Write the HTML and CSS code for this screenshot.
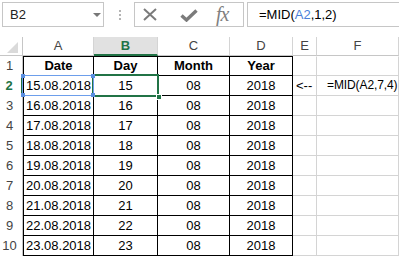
FILE: index.html
```html
<!doctype html>
<html lang="en">

<head>
  <meta charset="utf-8">
  <title>MID formula - sheet</title>
  <link rel="stylesheet" href="styles.css">
</head>

<body>
  <div class="fbar">
    <div class="namebox">B2<span class="caret"></span></div>
    <div class="grip"><i></i><i></i><i></i></div>
    <div class="btns">
      <svg class="cancel" width="14" height="13" viewBox="0 0 14 13">
        <path d="M1 1L13 12M13 1L1 12" stroke="#7b7b7b" stroke-width="2" fill="none" />
      </svg>
      <svg class="enter" width="18" height="13" viewBox="0 0 18 13">
        <path d="M1.5 6.5L6.5 11L16.5 1.5" stroke="#7b7b7b" stroke-width="3.4" fill="none" />
      </svg>
      <span class="fx">fx</span>
    </div>
    <div class="formula">=MID(<span class="ref">A2</span>,1,2)</div>
  </div>

  <div class="sheet">
    <div class="corner"><span class="tri"></span></div>
    <div class="ch">A</div>
    <div class="ch sel">B</div>
    <div class="ch">C</div>
    <div class="ch">D</div>
    <div class="ch">E</div>
    <div class="ch">F</div>

    <div class="rh">1</div>
    <div class="c t a top b mid">Date</div>
    <div class="c t top b mid">Day</div>
    <div class="c t top b mid">Month</div>
    <div class="c t top b mid">Year</div>
    <div class="c g top"></div>
    <div class="c g top"></div>

    <div class="rh sel">2</div>
    <div class="c t a">15.08.2018</div>
    <div class="c t mid">15</div>
    <div class="c t mid">08</div>
    <div class="c t mid">2018</div>
    <div class="c g">&lt;--</div>
    <div class="c g note">=MID(A2,7,4)</div>

    <div class="rh">3</div>
    <div class="c t a">16.08.2018</div>
    <div class="c t mid">16</div>
    <div class="c t mid">08</div>
    <div class="c t mid">2018</div>
    <div class="c g"></div>
    <div class="c g"></div>

    <div class="rh">4</div>
    <div class="c t a">17.08.2018</div>
    <div class="c t mid">17</div>
    <div class="c t mid">08</div>
    <div class="c t mid">2018</div>
    <div class="c g"></div>
    <div class="c g"></div>

    <div class="rh">5</div>
    <div class="c t a">18.08.2018</div>
    <div class="c t mid">18</div>
    <div class="c t mid">08</div>
    <div class="c t mid">2018</div>
    <div class="c g"></div>
    <div class="c g"></div>

    <div class="rh">6</div>
    <div class="c t a">19.08.2018</div>
    <div class="c t mid">19</div>
    <div class="c t mid">08</div>
    <div class="c t mid">2018</div>
    <div class="c g"></div>
    <div class="c g"></div>

    <div class="rh">7</div>
    <div class="c t a">20.08.2018</div>
    <div class="c t mid">20</div>
    <div class="c t mid">08</div>
    <div class="c t mid">2018</div>
    <div class="c g"></div>
    <div class="c g"></div>

    <div class="rh">8</div>
    <div class="c t a">21.08.2018</div>
    <div class="c t mid">21</div>
    <div class="c t mid">08</div>
    <div class="c t mid">2018</div>
    <div class="c g"></div>
    <div class="c g"></div>

    <div class="rh">9</div>
    <div class="c t a">22.08.2018</div>
    <div class="c t mid">22</div>
    <div class="c t mid">08</div>
    <div class="c t mid">2018</div>
    <div class="c g"></div>
    <div class="c g"></div>

    <div class="rh">10</div>
    <div class="c t a">23.08.2018</div>
    <div class="c t mid">23</div>
    <div class="c t mid">08</div>
    <div class="c t mid">2018</div>
    <div class="c g"></div>
    <div class="c g"></div>

    <!-- selection overlays -->
    <div class="active"><span class="handle"></span></div>
    <div class="refbox">
      <i class="k tl"></i><i class="k tr"></i><i class="k bl"></i><i class="k br"></i>
    </div>
  </div>
</body>

</html>
```

FILE: styles.css
```css
* {
  box-sizing: border-box;
}

body {
  margin: 0;
  background: #fff;
  font-family: "Liberation Sans", Arial, sans-serif;
  font-size: 13px;
  color: #000;
  width: 399px;
  height: 257px;
  overflow: hidden;
}

/* formula bar */

.fbar {
  display: flex;
  align-items: flex-start;
  padding-top: 2px;
  height: 37px;
}

.namebox {
  position: relative;
  margin-left: 2px;
  width: 102px;
  height: 25px;
  border: 1px solid #c6c6c6;
  padding-left: 7px;
  line-height: 23px;
  color: #222;
}

.caret {
  position: absolute;
  left: 90px;
  top: 10px;
  border-left: 4px solid transparent;
  border-right: 4px solid transparent;
  border-top: 4px solid #777;
}

.grip {
  display: flex;
  flex-direction: column;
  gap: 2px;
  margin: 8px 0 0 15px;
}

.grip i {
  display: block;
  width: 2px;
  height: 2px;
  background: #b4b4b4;
}

.btns {
  display: flex;
  align-items: center;
  margin-left: 13px;
  width: 110px;
  height: 25px;
  border: 1px solid #c6c6c6;
}

.cancel {
  margin-left: 8px;
}

.enter {
  margin-left: 23px;
  margin-top: 1px;
}

.fx {
  margin-left: 18px;
  font-family: "Liberation Serif", serif;
  font-style: italic;
  font-size: 20px;
  color: #808080;
  letter-spacing: -1px;
}

.formula {
  flex: 1;
  margin: 0 -2px 0 3px;
  height: 25px;
  border: 1px solid #c6c6c6;
  padding-left: 11px;
  line-height: 23px;
}

.formula .ref {
  color: #4a7fd9;
}

/* sheet grid */

.sheet {
  position: relative;
  display: grid;
  grid-template-columns: 23px 71px 64px 72px 63px 24px 82px;
  grid-template-rows: 19px 20px repeat(9, 20px);
}

.corner {
  position: relative;
  border-right: 1px solid #c6c6c6;
  border-bottom: 1px solid #c6c6c6;
}

.tri {
  position: absolute;
  right: 4px;
  bottom: 2px;
  border-left: 11px solid transparent;
  border-bottom: 11px solid #dadada;
}

.ch {
  text-align: center;
  line-height: 18px;
  color: #444;
  border-right: 1px solid #d4d4d4;
  border-bottom: 1px solid #c6c6c6;
}

.ch.sel {
  background: #e1e1e1;
  color: #217346;
  font-weight: bold;
  border-bottom: 2px solid #217346;
}

.rh {
  text-align: center;
  padding-right: 3px;
  line-height: 20px;
  color: #444;
  border-right: 1px solid #c6c6c6;
}

.rh.sel {
  color: #217346;
  font-weight: bold;
  border-right: 2px solid #217346;
}

.c {
  line-height: 19px;
  white-space: nowrap;
  border-right: 1px solid #d4d4d4;
  border-bottom: 1px solid #d4d4d4;
}

.c.t {
  border-right-color: #000;
  border-bottom-color: #000;
}

.c.a {
  border-left: 1px solid #000;
  padding-left: 2px;
}

.c.top {
  border-top: 1px solid #000;
  line-height: 18px;
}

.c.g.top {
  border-top-color: #fff;
}

.c.g {
  padding-left: 3px;
}

.c.note {
  padding-left: 10px;
  font-size: 12px;
  letter-spacing: -0.1px;
}

.mid {
  text-align: center;
}

.c.a.mid {
  padding-left: 0;
}

.b {
  font-weight: bold;
}

/* active cell and formula reference */

.active {
  position: absolute;
  left: 92px;
  top: 37px;
  width: 67px;
  height: 23px;
  border: 2px solid #217346;
}

.handle {
  position: absolute;
  right: -5px;
  bottom: -5px;
  width: 6px;
  height: 6px;
  background: #217346;
  border: 1px solid #fff;
}

.refbox {
  position: absolute;
  left: 22px;
  top: 38px;
  width: 72px;
  height: 21px;
  border: 1px solid #6d9eeb;
}

.k {
  position: absolute;
  width: 4px;
  height: 4px;
  background: #5b8fe0;
}

.tl {
  left: -2px;
  top: -2px;
}

.tr {
  right: -2px;
  top: -2px;
}

.bl {
  left: -2px;
  bottom: -2px;
}

.br {
  right: -2px;
  bottom: -2px;
}
```
